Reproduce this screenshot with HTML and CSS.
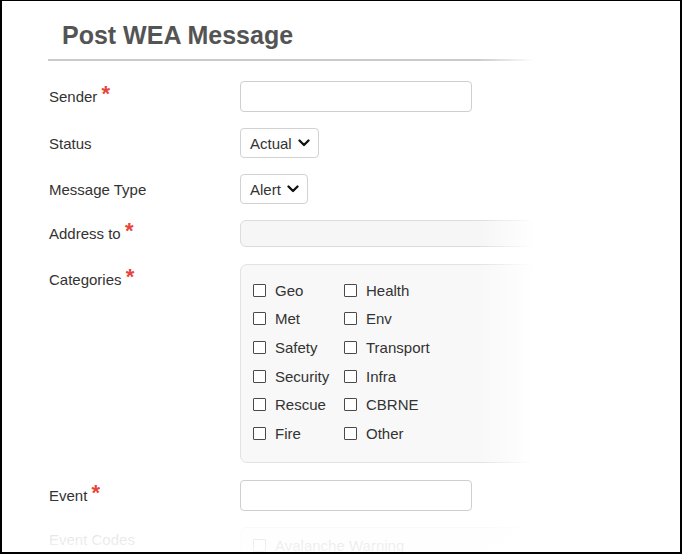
FILE: index.html
```html
<!DOCTYPE html>
<html>
<head>
<meta charset="utf-8">
<link rel="stylesheet" href="styles.css">
</head>
<body>
<div class="frame">
  <div class="title-wrap"><h1 class="title">Post WEA Message</h1></div>
  <form class="form">
    <div class="row r-sender">
      <label class="label">Sender <span class="req">*</span></label>
      <div class="input"></div>
    </div>
    <div class="row">
      <label class="label">Status</label>
      <div class="select">Actual <svg class="chev" width="12" height="8" viewBox="0 0 12 8"><polyline points="1.5,1.5 6,6 10.5,1.5" fill="none" stroke="#111" stroke-width="2.3" stroke-linecap="round" stroke-linejoin="round"/></svg></div>
    </div>
    <div class="row">
      <label class="label">Message Type</label>
      <div class="select">Alert <svg class="chev" width="12" height="8" viewBox="0 0 12 8"><polyline points="1.5,1.5 6,6 10.5,1.5" fill="none" stroke="#111" stroke-width="2.3" stroke-linecap="round" stroke-linejoin="round"/></svg></div>
    </div>
    <div class="row">
      <label class="label">Address to <span class="req">*</span></label>
      <div class="input wide grey"></div>
    </div>
    <div class="row top r-cat">
      <label class="label cat-label">Categories <span class="req">*</span></label>
      <div class="catbox">
        <div class="checks">
          <div class="chk"><span class="box"></span>Geo</div>
          <div class="chk"><span class="box"></span>Health</div>
          <div class="chk"><span class="box"></span>Met</div>
          <div class="chk"><span class="box"></span>Env</div>
          <div class="chk"><span class="box"></span>Safety</div>
          <div class="chk"><span class="box"></span>Transport</div>
          <div class="chk"><span class="box"></span>Security</div>
          <div class="chk"><span class="box"></span>Infra</div>
          <div class="chk"><span class="box"></span>Rescue</div>
          <div class="chk"><span class="box"></span>CBRNE</div>
          <div class="chk"><span class="box"></span>Fire</div>
          <div class="chk"><span class="box"></span>Other</div>
        </div>
      </div>
    </div>
    <div class="row r-event">
      <label class="label">Event <span class="req">*</span></label>
      <div class="input"></div>
    </div>
    <div class="row top">
      <label class="label codes-label">Event Codes</label>
      <div class="codebox">
        <div class="chk"><span class="box"></span>Avalanche Warning</div>
      </div>
    </div>
  </form>
  <div class="fade-right"></div>
  <div class="fade-bottom"></div>
</div>
</body>
</html>
```

FILE: styles.css
```css
* { box-sizing: border-box; }
html, body { margin: 0; padding: 0; background: #fff; }
body { font-family: "Liberation Sans", Arial, sans-serif; color: #333; }

.frame {
  position: relative;
  width: 682px;
  height: 554px;
  border-style: solid;
  border-color: #000;
  border-width: 1px 2px 2px 2px;
  overflow: hidden;
  background: #fff;
}

.title-wrap {
  margin-left: 46px;
  padding: 20px 0 9px 14px;
  border-bottom: 2px solid #cbcbcb;
}
.title {
  margin: 0;
  font-size: 25px;
  line-height: 29px;
  font-weight: bold;
  color: #545454;
}

.form {
  padding-left: 47px;
  display: flex;
  flex-direction: column;
  gap: 16px;
  margin-top: 20px;
}
.row { display: flex; align-items: center; }
.row.top { align-items: flex-start; }
.r-cat { margin-top: 1px; }
.r-event { margin-top: 1px; }

.label {
  width: 191px;
  flex: none;
  font-size: 15px;
  color: #333;
}
.cat-label { padding-top: 7px; }
.codes-label { padding-top: 4px; }

.req {
  color: #e8443a;
  font-weight: bold;
  font-size: 22px;
  line-height: 0;
  position: relative;
  top: -1px;
  margin-left: 0;
}

.input {
  width: 232px;
  height: 31px;
  border: 1px solid #cfcfcf;
  border-radius: 4px;
  background: #fff;
}
.input.wide { width: 420px; height: 27px; }
.input.grey { background: #f6f6f6; border-color: #dcdcdc; border-radius: 6px; }
.r-event .input { height: 31px; }

.select {
  height: 30px;
  display: inline-flex;
  align-items: center;
  gap: 6px;
  padding: 0 8px 0 9px;
  border: 1px solid #d2d2d2;
  border-radius: 4px;
  font-size: 15px;
  color: #333;
}
.chev { display: block; }

.catbox {
  width: 420px;
  height: 199px;
  background: #f8f8f8;
  border: 1px solid #e2e2e2;
  border-radius: 7px;
  padding: 11px 0 0 12px;
}
.checks {
  display: grid;
  grid-template-columns: 74px auto;
  column-gap: 17px;
  grid-auto-rows: 28.6px;
}
.chk {
  display: flex;
  align-items: center;
  font-size: 15px;
  color: #333;
}
.box {
  width: 13px;
  height: 13px;
  border: 1px solid #4a4a4a;
  border-radius: 1px;
  background: #fff;
  margin-right: 9px;
  flex: none;
}

.codebox {
  width: 420px;
  height: 60px;
  background: #f8f8f8;
  border: 1px solid #e2e2e2;
  border-radius: 7px;
  padding: 9px 0 0 12px;
}

.fade-right {
  position: absolute;
  top: 0;
  bottom: 0;
  left: 476px;
  right: 0;
  background: linear-gradient(to right, rgba(255,255,255,0) 0px, #fff 56px);
}
.fade-bottom {
  position: absolute;
  left: 0;
  right: 0;
  top: 512px;
  bottom: 0;
  background: linear-gradient(to bottom, rgba(255,255,255,0) 0px, rgba(255,255,255,0.86) 16px, rgba(255,255,255,0.94) 40px);
}
```
